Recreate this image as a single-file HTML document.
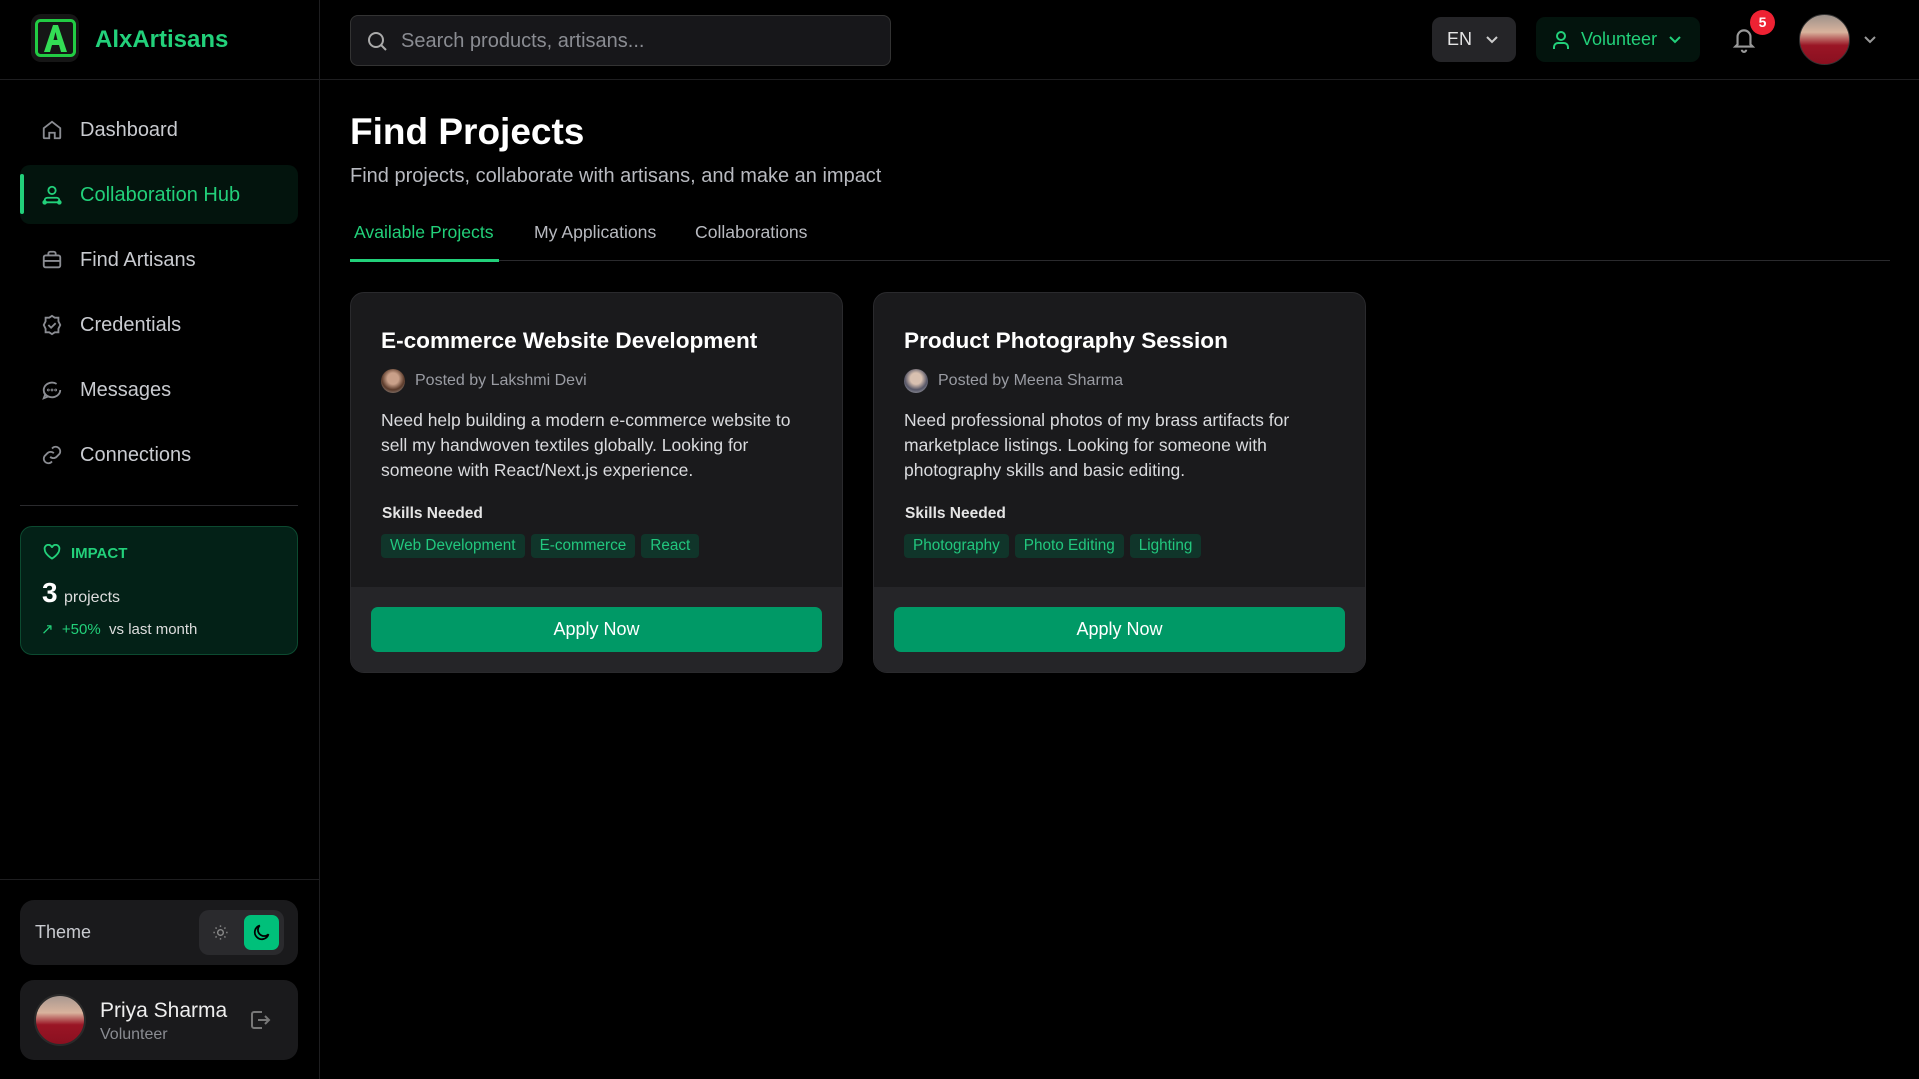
<!DOCTYPE html>
<html><head><meta charset="utf-8"><style>
*{box-sizing:border-box;margin:0;padding:0}
body{width:1919px;height:1079px;background:#000;font-family:"Liberation Sans",sans-serif;color:#fff;position:relative;overflow:hidden}
.a{position:absolute}
.nav{position:absolute;left:20px;width:278px;height:59px;display:flex;align-items:center;font-size:20px;color:#c9cbd0}
.nav svg{position:absolute;left:21px}
.nav span{position:absolute;left:60px;top:19px}
.card{position:absolute;top:292px;width:493px;height:381px;background:#1a1a1c;border:1px solid #2a2a2d;border-radius:14px;overflow:hidden}
.card h3{position:absolute;left:30px;top:35px;font-size:22.6px;font-weight:bold;color:#fff}
.post{position:absolute;left:30px;top:76px;font-size:16px;color:#9a9ca3;display:flex;align-items:center}
.post i{width:24px;height:24px;border-radius:50%;background:radial-gradient(circle at 50% 40%,#c9a089 30%,#5a3a2a 60%,#aaa 100%);margin-right:10px;display:inline-block}
.desc{position:absolute;left:30px;top:115px;width:440px;font-size:17.5px;line-height:25px;color:#dadbde}
.sk{position:absolute;left:31px;top:212px;font-size:15.5px;font-weight:bold;color:#e5e5e5}
.tags{position:absolute;left:30px;top:241px;display:flex;gap:6px}
.tags b{font-weight:normal;background:#10352a;color:#22c77e;font-size:15.3px;padding:3px 9px;border-radius:4px;height:24px;line-height:18px}
.foot{position:absolute;left:0;right:0;bottom:0;height:85px;background:#252528}
.btn{position:absolute;left:20px;right:20px;top:20px;height:45px;background:#009966;border-radius:7px;font-size:18px;color:#fff;display:flex;align-items:center;justify-content:center}
</style></head><body>
<div class="a" style="left:319px;top:0;width:1px;height:1079px;background:#1e1e20"></div>
<div class="a" style="left:0;top:79px;width:1919px;height:1px;background:#1e1e20"></div>
<div class="a" style="left:31px;top:14px;width:48px;height:48px;border-radius:10px;background:#161616"></div>
<svg class="a" style="left:35px;top:19px" width="41" height="38" viewBox="0 0 41 38"><rect x="1.5" y="1.5" width="38" height="35" rx="4" fill="none" stroke="#22cc44" stroke-width="3"/><path d="M9 33 L18 6 H23 L32 33 H26 L24 26 H17 L15 33Z M18.5 21 H22.5 L20.5 13Z" fill="#33dd55"/></svg>
<div class="a" style="left:95px;top:26px;font-size:24px;font-weight:bold;color:#22d07a">AlxArtisans</div>

<div class="nav" style="top:100px"><svg width="22" height="22" viewBox="0 0 24 24" fill="none" stroke="#8a8c92" stroke-width="2"><path d="M3 10l9-7 9 7v10a1 1 0 0 1-1 1h-5v-6h-6v6H4a1 1 0 0 1-1-1z"/></svg><span>Dashboard</span></div>
<div class="nav" style="top:165px;background:#03140d;border-radius:10px;color:#22d07a"><div class="a" style="left:0;top:9px;width:4px;height:40px;background:#22d07a;border-radius:2px"></div><svg width="22" height="22" viewBox="0 0 24 24" fill="none" stroke="#22d07a" stroke-width="2"><circle cx="12" cy="7" r="4"/><path d="M4 20v-2a3 3 0 0 1 3-3h10a3 3 0 0 1 3 3v2z"/><circle cx="4" cy="20" r="1.5"/><circle cx="20" cy="20" r="1.5"/></svg><span>Collaboration Hub</span></div>
<div class="nav" style="top:230px"><svg width="22" height="22" viewBox="0 0 24 24" fill="none" stroke="#8a8c92" stroke-width="2"><rect x="3" y="7" width="18" height="13" rx="2"/><path d="M8 7V5a2 2 0 0 1 2-2h4a2 2 0 0 1 2 2v2M3 13h18"/></svg><span>Find Artisans</span></div>
<div class="nav" style="top:295px"><svg width="22" height="22" viewBox="0 0 24 24" fill="none" stroke="#8a8c92" stroke-width="2"><path d="M12 2l3 2h4v4l2 4-2 4v4h-4l-3 2-3-2H5v-4l-2-4 2-4V4h4z"/><path d="M8 12l3 3 5-5"/></svg><span>Credentials</span></div>
<div class="nav" style="top:360px"><svg width="22" height="22" viewBox="0 0 24 24" fill="none" stroke="#8a8c92" stroke-width="2"><path d="M21 12a9 8 0 1 1-4-6.7M21 12a9 8 0 0 1-13 7L3 21l1.5-4A8 8 0 0 1 3 12"/><circle cx="8" cy="12" r=".5"/><circle cx="12" cy="12" r=".5"/><circle cx="16" cy="12" r=".5"/></svg><span>Messages</span></div>
<div class="nav" style="top:425px"><svg width="22" height="22" viewBox="0 0 24 24" fill="none" stroke="#8a8c92" stroke-width="2"><path d="M10 14a5 5 0 0 0 7 0l3-3a5 5 0 0 0-7-7l-1 1M14 10a5 5 0 0 0-7 0l-3 3a5 5 0 0 0 7 7l1-1"/></svg><span>Connections</span></div>
<div class="a" style="left:20px;top:505px;width:278px;height:1px;background:#2a2a2d"></div>

<div class="a" style="left:20px;top:526px;width:278px;height:129px;background:#032117;border:1px solid #0c4a30;border-radius:12px">
<svg class="a" style="left:22px;top:17px" width="18" height="16" viewBox="0 0 24 22" fill="none" stroke="#22d07a" stroke-width="2.5"><path d="M12 20S2 14 2 7.5A5 5 0 0 1 12 5a5 5 0 0 1 10 2.5C22 14 12 20 12 20z"/></svg>
<div class="a" style="left:50px;top:18px;font-size:15px;font-weight:bold;color:#22d07a">IMPACT</div>
<div class="a" style="left:21px;top:50px;font-size:28px;font-weight:bold">3</div>
<div class="a" style="left:43px;top:62px;font-size:16px;color:#ddd">projects</div>
<div class="a" style="left:20px;top:93px;font-size:15px;color:#22d07a">↗ &nbsp;+50% <span style="color:#ddd">&nbsp;vs last month</span></div>
</div>

<div class="a" style="left:0;top:879px;width:319px;height:1px;background:#1e1e20"></div>
<div class="a" style="left:20px;top:900px;width:278px;height:65px;background:#1a1a1c;border-radius:14px">
<div class="a" style="left:15px;top:22px;font-size:18px;color:#c9cbd0">Theme</div>
<div class="a" style="left:179px;top:10px;width:85px;height:45px;background:#2a2a2d;border-radius:10px"></div>
<div class="a" style="left:224px;top:15px;width:35px;height:35px;background:#00c07a;border-radius:7px"></div>
<svg class="a" style="left:192px;top:24px" width="17" height="17" viewBox="0 0 24 24" fill="none" stroke="#888" stroke-width="2"><circle cx="12" cy="12" r="4"/><path d="M12 2v2M12 20v2M2 12h2M20 12h2M5 5l1.5 1.5M17.5 17.5L19 19M5 19l1.5-1.5M17.5 6.5L19 5"/></svg>
<svg class="a" style="left:231px;top:22px" width="21" height="21" viewBox="0 0 24 24" fill="none" stroke="#000" stroke-width="2"><path d="M20 14A8 8 0 1 1 10 4a6 6 0 0 0 10 10z"/></svg>
</div>
<div class="a" style="left:20px;top:980px;width:278px;height:80px;background:#1a1a1c;border-radius:14px">
<div class="a" style="left:14px;top:14px;width:52px;height:52px;border-radius:50%;background:linear-gradient(#a89890 0%,#d9b39d 35%,#9a1525 60%,#8a1020 100%);border:2px solid #2a2a2a"></div>
<div class="a" style="left:80px;top:19px;font-size:21px;color:#eee">Priya Sharma</div>
<div class="a" style="left:80px;top:46px;font-size:16px;color:#8a8c92">Volunteer</div>
<svg class="a" style="left:228px;top:28px" width="24" height="24" viewBox="0 0 24 24" fill="none" stroke="#777" stroke-width="2"><path d="M14 4H6a2 2 0 0 0-2 2v12a2 2 0 0 0 2 2h8M10 12h11M17 8l4 4-4 4"/></svg>
</div>

<div class="a" style="left:350px;top:15px;width:541px;height:51px;background:#17171a;border:1px solid #333;border-radius:8px">
<svg class="a" style="left:14px;top:13px" width="24" height="24" viewBox="0 0 24 24" fill="none" stroke="#aaa" stroke-width="2"><circle cx="11" cy="11" r="7"/><path d="M16 16l5 5"/></svg>
<div class="a" style="left:50px;top:14px;font-size:20px;color:#8a8c92">Search products, artisans...</div>
</div>
<div class="a" style="left:1432px;top:17px;width:84px;height:45px;background:#252528;border-radius:9px">
<div class="a" style="left:15px;top:12px;font-size:18px;color:#e5e5e5">EN</div>
<svg class="a" style="left:52px;top:16px" width="16" height="14" viewBox="0 0 16 14" fill="none" stroke="#ccc" stroke-width="2"><path d="M3 4l5 5 5-5"/></svg></div>
<div class="a" style="left:1536px;top:17px;width:164px;height:45px;background:#03140d;border-radius:9px">
<svg class="a" style="left:16px;top:13px" width="18" height="20" viewBox="0 0 18 20" fill="none" stroke="#22d07a" stroke-width="2"><circle cx="9" cy="6" r="4"/><path d="M2 19v-2a4 4 0 0 1 4-4h6a4 4 0 0 1 4 4v2"/></svg>
<div class="a" style="left:45px;top:12px;font-size:18px;color:#22d07a">Volunteer</div>
<svg class="a" style="left:131px;top:16px" width="16" height="14" viewBox="0 0 16 14" fill="none" stroke="#22d07a" stroke-width="2"><path d="M3 4l5 5 5-5"/></svg></div>
<svg class="a" style="left:1731px;top:25px" width="26" height="28" viewBox="0 0 24 26" fill="none" stroke="#999" stroke-width="2"><path d="M6 18V11a6 6 0 0 1 12 0v7l2 2H4zM10 23a2 2 0 0 0 4 0"/></svg>
<div class="a" style="left:1750px;top:10px;width:25px;height:25px;border-radius:50%;background:#ee2233;font-size:14px;font-weight:bold;text-align:center;line-height:25px">5</div>
<div class="a" style="left:1799px;top:14px;width:51px;height:51px;border-radius:50%;background:linear-gradient(#9c918a 0%,#d9b39d 35%,#9a1525 62%,#8a1020 100%);border:1px solid #333"></div>
<svg class="a" style="left:1862px;top:33px" width="16" height="14" viewBox="0 0 16 14" fill="none" stroke="#999" stroke-width="2"><path d="M3 4l5 5 5-5"/></svg>

<div class="a" style="left:350px;top:111px;font-size:37px;font-weight:bold">Find Projects</div>
<div class="a" style="left:350px;top:165px;font-size:20px;color:#b8bac0">Find projects, collaborate with artisans, and make an impact</div>
<div class="a" style="left:354px;top:222px;font-size:17.6px;color:#22d07a">Available Projects</div>
<div class="a" style="left:534px;top:222px;font-size:17.6px;color:#b8bac0">My Applications</div>
<div class="a" style="left:695px;top:222px;font-size:17.6px;color:#b8bac0">Collaborations</div>
<div class="a" style="left:350px;top:260px;width:1540px;height:1px;background:#2a2a2d"></div>
<div class="a" style="left:350px;top:259px;width:149px;height:3px;background:#22d07a"></div>

<div class="card" style="left:350px">
<h3>E-commerce Website Development</h3>
<div class="post"><i></i>Posted by Lakshmi Devi</div>
<div class="desc">Need help building a modern e-commerce website to sell my handwoven textiles globally. Looking for someone with React/Next.js experience.</div>
<div class="sk">Skills Needed</div>
<div class="tags"><b>Web Development</b><b>E-commerce</b><b>React</b></div>
<div class="foot"><div class="btn">Apply Now</div></div>
</div>
<div class="card" style="left:873px">
<h3>Product Photography Session</h3>
<div class="post"><i style="background:radial-gradient(circle at 50% 40%,#d8c0b0 30%,#556 60%,#bbb 100%)"></i>Posted by Meena Sharma</div>
<div class="desc">Need professional photos of my brass artifacts for marketplace listings. Looking for someone with photography skills and basic editing.</div>
<div class="sk">Skills Needed</div>
<div class="tags"><b>Photography</b><b>Photo Editing</b><b>Lighting</b></div>
<div class="foot"><div class="btn">Apply Now</div></div>
</div>
</body></html>
